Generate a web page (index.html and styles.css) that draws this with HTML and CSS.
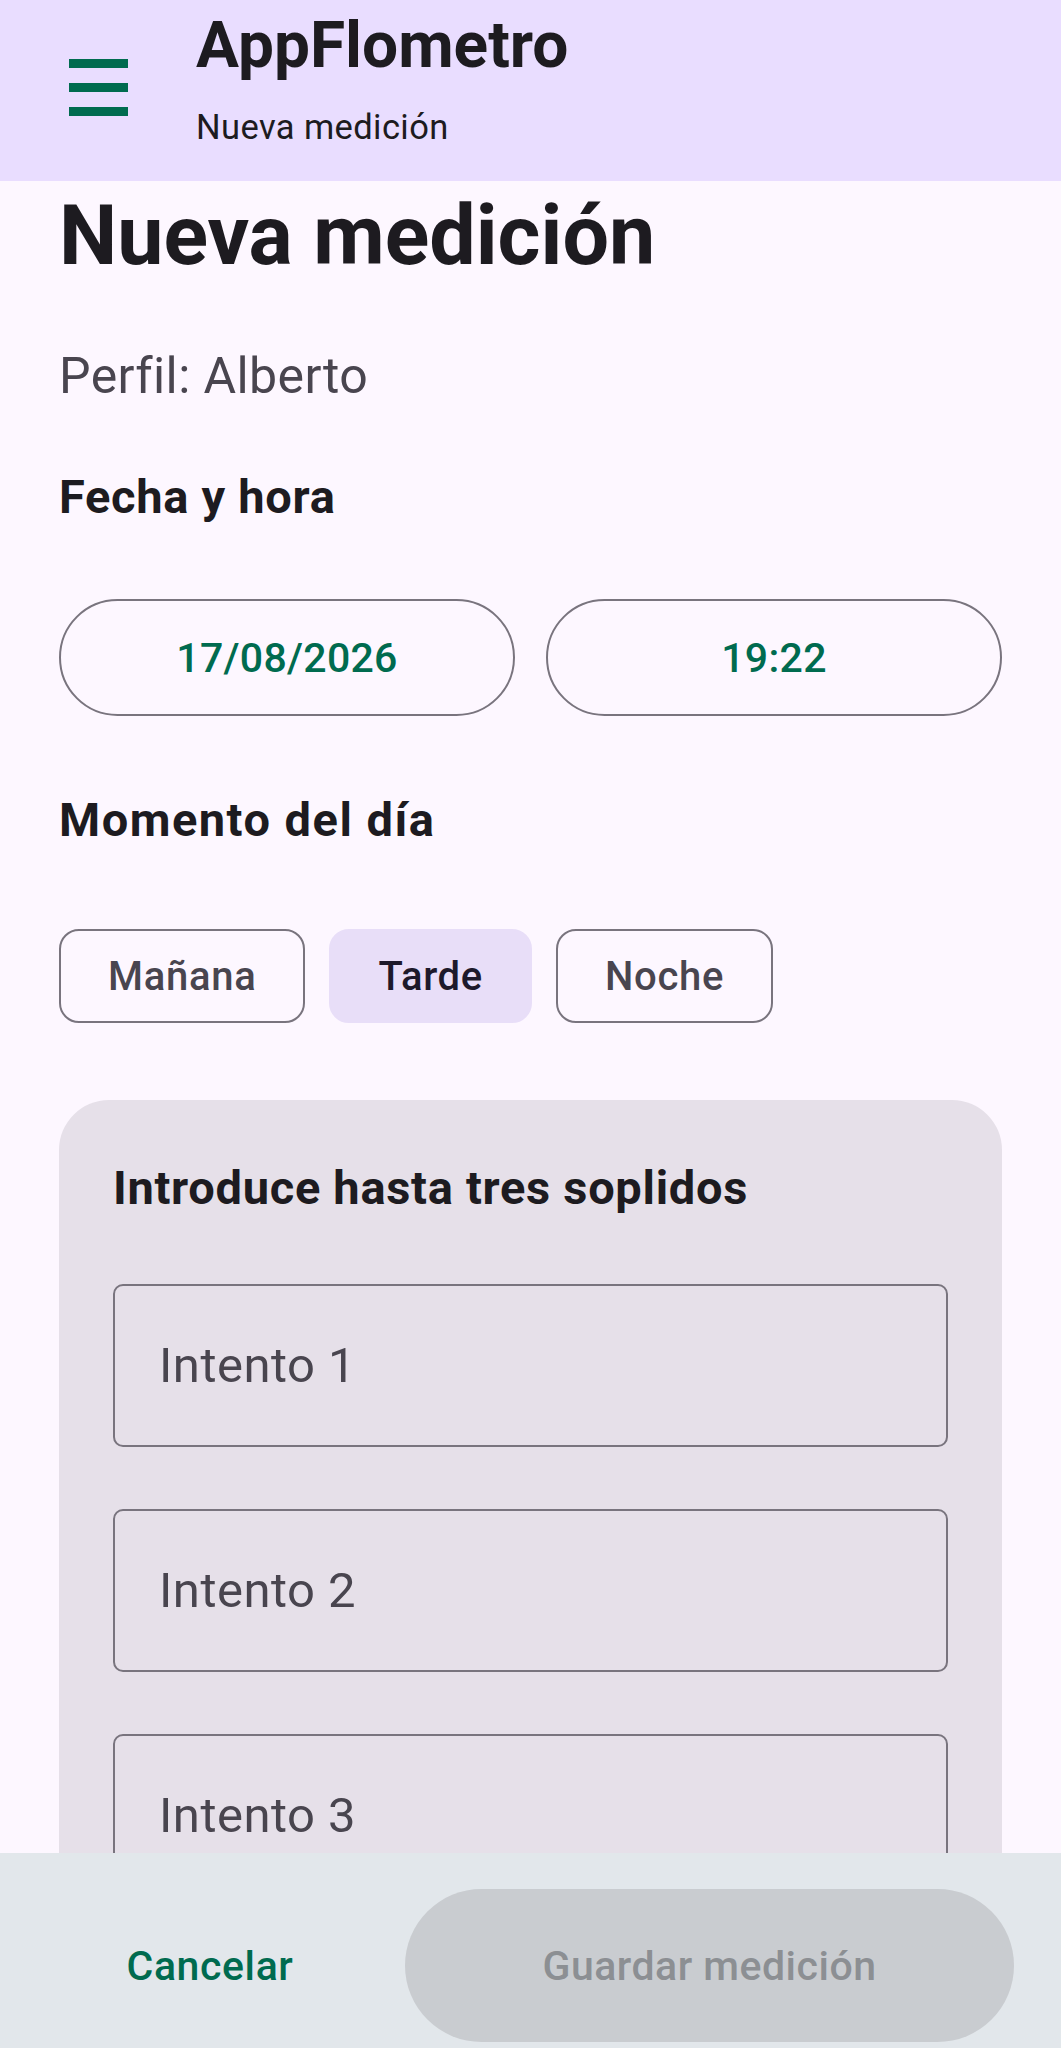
FILE: index.html
```html
<!DOCTYPE html>
<html lang="es">
<head>
    <meta charset="UTF-8">
    <meta name="viewport" content="width=device-width, initial-scale=1.0">
    <title>AppFlometro</title>
    <link rel="stylesheet" href="styles.css">
</head>
<body>

    <header class="topbar">
        <button class="menu-btn" aria-label="Menú">
            <svg width="59" height="57" viewBox="0 0 59 57">
                <rect x="0" y="0" width="59" height="9" fill="currentColor"/>
                <rect x="0" y="24" width="59" height="9" fill="currentColor"/>
                <rect x="0" y="48" width="59" height="9" fill="currentColor"/>
            </svg>
        </button>
        <div class="titles">
            <div class="app-title">AppFlometro</div>
            <div class="app-subtitle">Nueva medición</div>
        </div>
    </header>

    <main id="form-container">
        <h1>Nueva medición</h1>
        <p class="profile">Perfil: Alberto</p>

        <h3 class="section-title">Fecha y hora</h3>
        <div class="pill-row">
            <button class="pill" id="date-btn">17/08/2026</button>
            <button class="pill" id="time-btn">19:22</button>
        </div>

        <h3 class="section-title moment-title">Momento del día</h3>
        <div class="chip-row">
            <button class="chip">Mañana</button>
            <button class="chip selected">Tarde</button>
            <button class="chip">Noche</button>
        </div>

        <section class="blows-card">
            <h3 class="section-title">Introduce hasta tres soplidos</h3>
            <input type="number" class="blow-input" id="blow-1" placeholder="Intento 1">
            <input type="number" class="blow-input" id="blow-2" placeholder="Intento 2">
            <input type="number" class="blow-input" id="blow-3" placeholder="Intento 3">
        </section>
    </main>

    <footer class="action-bar">
        <button class="cancel-btn" id="cancel-btn">Cancelar</button>
        <button class="save-btn" id="save-btn" disabled>Guardar medición</button>
    </footer>

    <script>
        // Chip selection for the moment of the day
        document.querySelectorAll(".chip").forEach(chip => {
            chip.addEventListener("click", () => {
                document.querySelectorAll(".chip").forEach(c => c.classList.remove("selected"));
                chip.classList.add("selected");
            });
        });

        // Enable save once at least one blow is entered
        document.querySelectorAll(".blow-input").forEach(input => {
            input.addEventListener("input", () => {
                const anyValue = [...document.querySelectorAll(".blow-input")].some(i => i.value !== "");
                document.getElementById("save-btn").disabled = !anyValue;
            });
        });
    </script>

</body>
</html>
```

FILE: styles.css
```css
body {
    font-family: Roboto, "Noto Sans", sans-serif;
    background-color: #fdf7ff;
    color: #1d1b20;
    margin: 0;
    padding: 0 0 240px 0;
}
button {
    font-family: inherit;
    cursor: pointer;
}
.topbar {
    display: flex;
    align-items: flex-start;
    height: 181px;
    background: #e9ddff;
}
.menu-btn {
    margin: 59px 0 0 69px;
    padding: 0;
    border: none;
    background: none;
    color: #006b4f;
    line-height: 0;
}
.titles {
    margin-left: 68px;
    padding-top: 8px;
}
.app-title {
    font-size: 64px;
    font-weight: 700;
    line-height: 76px;
}
.app-subtitle {
    font-size: 34.5px;
    line-height: 40px;
    letter-spacing: 0.4px;
    margin-top: 23px;
}
#form-container {
    padding: 0 59px;
}
h1 {
    font-size: 82.5px;
    font-weight: 700;
    line-height: 100px;
    margin: 5px 0 0 0;
}
.profile {
    font-size: 50px;
    line-height: 60px;
    color: #49454f;
    letter-spacing: 0.4px;
    margin: 60px 0 0 0;
}
.section-title {
    font-size: 47px;
    font-weight: 700;
    line-height: 56px;
    letter-spacing: 0.7px;
    margin: 63px 0 0 0;
}
.moment-title {
    margin-top: 76px;
    letter-spacing: 1.5px;
}
.pill-row {
    display: flex;
    gap: 31px;
    margin-top: 74px;
}
.pill {
    flex: 1;
    height: 117px;
    border: 2px solid #79747e;
    border-radius: 60px;
    background: transparent;
    color: #006b4f;
    font-size: 41px;
    font-weight: 500;
    letter-spacing: 0.3px;
}
.chip-row {
    display: flex;
    gap: 24px;
    margin-top: 81px;
}
.chip {
    height: 94px;
    padding: 0 47px;
    border: 2px solid #79747e;
    border-radius: 20px;
    background: transparent;
    color: #49454f;
    font-size: 40px;
    font-weight: 500;
    letter-spacing: 0.7px;
}
.chip.selected {
    border-color: #e8def8;
    background: #e8def8;
    color: #1d192b;
}
.blows-card {
    margin-top: 77px;
    padding: 60px 54px 60px 54px;
    background: #e6e0e9;
    border-radius: 50px;
}
.blows-card .section-title {
    margin-top: 0;
}
.blow-input {
    display: block;
    box-sizing: border-box;
    width: 100%;
    height: 163px;
    margin-top: 62px;
    padding: 0 0 0 44px;
    border: 2px solid #79747e;
    border-radius: 10px;
    background: transparent;
    font-family: inherit;
    font-size: 49px;
    color: #1d1b20;
    letter-spacing: 0.5px;
}
.blow-input:first-of-type {
    margin-top: 68px;
}
.blow-input::placeholder {
    color: #49454f;
}
.action-bar {
    position: fixed;
    left: 0;
    right: 0;
    bottom: 0;
    height: 195px;
    box-sizing: border-box;
    display: flex;
    align-items: flex-start;
    gap: 24px;
    padding: 36px 47px 0 47px;
    background: #e2e7eb;
}
.cancel-btn {
    flex: 1;
    height: 153px;
    padding: 0 8px 0 0;
    border: none;
    background: none;
    color: #006b4f;
    font-size: 41px;
    font-weight: 500;
    letter-spacing: 0.6px;
}
.save-btn {
    width: 609px;
    height: 153px;
    border: none;
    border-radius: 77px;
    background: #c9ccd0;
    color: #8c8f93;
    font-size: 41px;
    font-weight: 500;
    letter-spacing: 0.5px;
}
```
